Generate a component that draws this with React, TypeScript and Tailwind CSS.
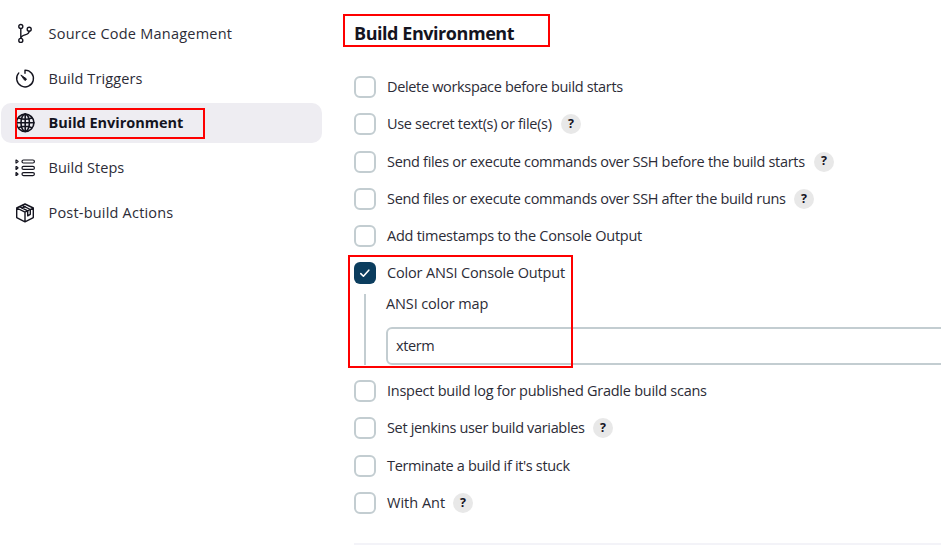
import type { ReactNode } from "react";

function Icon({ children }: { children: ReactNode }) {
  return (
    <svg
      viewBox="0 0 20 20"
      className="size-5 shrink-0 overflow-visible"
      fill="none"
      stroke="#14141f"
      strokeWidth="1.4"
      strokeLinecap="round"
      strokeLinejoin="round"
    >
      {children}
    </svg>
  );
}

const BranchIcon = () => (
  <Icon>
    <circle cx="5.8" cy="2.5" r="2" />
    <circle cx="14.2" cy="5.2" r="2" />
    <circle cx="5.8" cy="16.4" r="2" />
    <path d="M5.8 4.6v9.8M14.2 7.2c0 4.6-8.2 2.8-8.3 7.2" />
  </Icon>
);

const TimerIcon = () => (
  <Icon>
    <path d="M10 4.2V1.1a8.4 8.4 0 1 1-6.2 2.8" />
    <path d="M6.2 6.2l4.9 3.4a1.1 1.1 0 0 1-1.6 1.5z" fill="#14141f" strokeWidth="0.9" />
  </Icon>
);

const GlobeIcon = () => (
  <Icon>
    <g strokeWidth="1.6">
      <circle cx="10.2" cy="9.8" r="8.7" />
      <ellipse cx="10.2" cy="9.8" rx="4.2" ry="8.7" />
      <path d="M10.2 1.1v17.4M1.5 9.8h17.4M3.6 4.9c4 1.7 9.2 1.7 13.2 0M3.6 14.7c4-1.7 9.2-1.7 13.2 0" />
    </g>
  </Icon>
);

const StepsIcon = () => (
  <Icon>
    {[3.5, 9.9, 16.1].map((y) => (
      <g key={y} strokeWidth="1.2">
        <rect x="7" y={y - 1.5} width="12.4" height="3" rx="1.5" />
        <path d={`M1 ${y - 1.4}h0.5l1.6 1.4l-1.6 1.4h-0.5z`} />
      </g>
    ))}
  </Icon>
);

const PackageIcon = () => (
  <Icon>
    <path d="M10 1l8.3 4v9.6L10 18.8l-8.3-4.2V5zM1.7 5L10 9.2l8.3-4.2M10 9.2v9.6" />
    <path d="M4.5 3.7l8.2 4.2v5l2.6-1.6V6.5L7.2 2.4M7 5.2l3.2-1.6" />
  </Icon>
);

function NavItem({ icon, label, text, active = false }: { icon: ReactNode; label: string; text: string; active?: boolean }) {
  return (
    <div className={`flex h-10 items-center gap-[13.5px] rounded-[10px] pl-3.5 ${active ? "bg-[#eeedf2]" : ""}`}>
      {icon}
      <span className={`whitespace-nowrap text-[14.5px] leading-5 ${text}`}>{label}</span>
    </div>
  );
}

function Option({ label, text, checked = false, help = false }: { label: string; text: string; checked?: boolean; help?: boolean }) {
  return (
    <div className="flex h-[22px] items-center">
      <span
        className={`flex size-[22px] shrink-0 items-center justify-center rounded-md ${
          checked ? "bg-[#0b3d5e]" : "border-2 border-[#c3cdd1]"
        }`}
      >
        {checked && (
          <svg viewBox="0 0 12 12" className="size-3" fill="none" stroke="white" strokeWidth="1.6" strokeLinecap="round" strokeLinejoin="round">
            <path d="M1.8 6.6l2.6 2.6 5.4-6" />
          </svg>
        )}
      </span>
      <span className={`ml-[11px] shrink-0 whitespace-nowrap leading-5 ${text}`}>{label}</span>
      {help && (
        <span className="flex size-5 shrink-0 items-center justify-center rounded-full bg-[#e8e8e8] text-[12.5px] leading-none font-bold text-[#14141f]">
          ?
        </span>
      )}
    </div>
  );
}

export default function App() {
  return (
    <div className="relative flex h-[556px] w-[941px] overflow-hidden bg-white font-['Open_Sans','Noto_Sans',sans-serif] text-[14.5px] text-[#2c2c37]">
      <nav className="flex w-[322px] shrink-0 flex-col gap-[4.7px] pt-[14px] pl-px">
        <NavItem icon={<BranchIcon />} label="Source Code Management" text="tracking-[0.23px]" />
        <NavItem icon={<TimerIcon />} label="Build Triggers" text="tracking-[0.1px]" />
        <NavItem icon={<GlobeIcon />} label="Build Environment" text="font-bold tracking-[-0.02px] text-[#14141f]" active />
        <NavItem icon={<StepsIcon />} label="Build Steps" text="tracking-[0.05px]" />
        <NavItem icon={<PackageIcon />} label="Post-build Actions" text="tracking-[0.2px]" />
      </nav>

      <main className="ml-8 flex w-[640px] shrink-0 flex-col">
        <h2 className="mt-[21px] h-6 text-[18px] leading-6 font-bold whitespace-nowrap tracking-[-0.45px] text-[#14141f]">Build Environment</h2>
        <div className="mt-[31px] flex flex-col gap-[15.28px]">
          <Option label="Delete workspace before build starts" text="w-[240px] tracking-[-0.34px]" />
          <Option label="Use secret text(s) or file(s)" text="w-[174px] tracking-[-0.32px]" help />
          <Option label="Send files or execute commands over SSH before the build starts" text="w-[427px] tracking-[-0.31px]" help />
          <Option label="Send files or execute commands over SSH after the build runs" text="w-[407px] tracking-[-0.31px]" help />
          <Option label="Add timestamps to the Console Output" text="w-[260px] tracking-[-0.25px]" />
          <Option label="Color ANSI Console Output" text="w-[180px] tracking-[-0.16px]" checked />
        </div>
        <div className="mt-[9.6px] ml-[10px] h-[71px] border-l-2 border-[#c3cdd1] pl-5">
          <label className="block h-5 leading-5 tracking-[-0.13px]">
            <span>ANSI color map</span>
          </label>
          <div className="mt-[13px] flex h-[38px] items-center rounded-md border-2 border-[#c3cdd1] pl-2">
            <span className="tracking-[-0.4px]">xterm</span>
          </div>
        </div>
        <div className="mt-[15px] flex flex-col gap-[15.3px]">
          <Option label="Inspect build log for published Gradle build scans" text="w-[330px] tracking-[-0.26px]" />
          <Option label="Set jenkins user build variables" text="w-[206px] tracking-[-0.34px]" help />
          <Option label="Terminate a build if it's stuck" text="w-[190px] tracking-[-0.34px]" />
          <Option label="With Ant" text="w-[66px] tracking-[0px]" help />
        </div>
        <hr className="mt-[29px] border-t-2 border-[#f3f3f8]" />
      </main>

      <div className="absolute top-[108px] left-[15px] h-[31px] w-[190px] border-2 border-[#fe0000]" />
      <div className="absolute top-[14px] left-[343px] h-[33px] w-[207px] border-2 border-[#fe0000]" />
      <div className="absolute top-[255px] left-[348px] h-[113px] w-[225px] border-2 border-[#fe0000]" />
    </div>
  );
}
